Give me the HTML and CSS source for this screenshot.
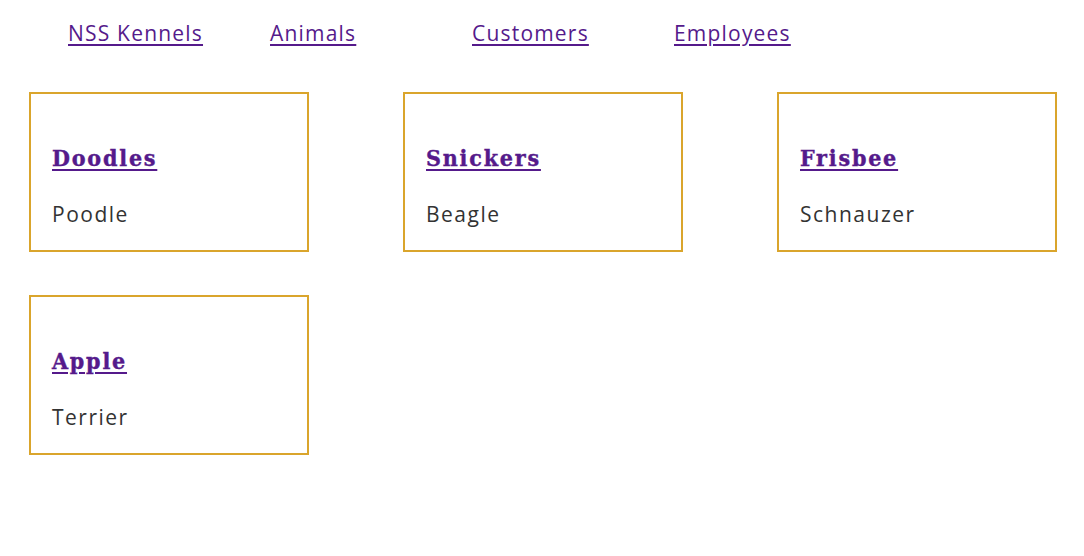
FILE: index.html
```html
<!DOCTYPE html>
<html>
<head>
<meta charset="utf-8">
<link rel="stylesheet" href="styles.css">
</head>
<body>
<nav class="navbar">
  <ul class="nav-list">
    <li class="nav-item"><a class="nav-link" href="#">NSS Kennels</a></li>
    <li class="nav-item"><a class="nav-link" href="#">Animals</a></li>
    <li class="nav-item"><a class="nav-link" href="#">Customers</a></li>
    <li class="nav-item"><a class="nav-link" href="#">Employees</a></li>
  </ul>
</nav>
<main class="animals">
  <section class="animal">
    <h3 class="animal-name"><a href="#">Doodles</a></h3>
    <div class="animal-breed">Poodle</div>
  </section>
  <section class="animal">
    <h3 class="animal-name"><a href="#">Snickers</a></h3>
    <div class="animal-breed">Beagle</div>
  </section>
  <section class="animal">
    <h3 class="animal-name"><a href="#">Frisbee</a></h3>
    <div class="animal-breed">Schnauzer</div>
  </section>
  <section class="animal">
    <h3 class="animal-name"><a href="#">Apple</a></h3>
    <div class="animal-breed">Terrier</div>
  </section>
</main>
</body>
</html>
```
FILE: styles.css
```css
body {
  margin: 0;
  background: #fff;
  font-family: "Open Sans", "Noto Sans", sans-serif;
  color: #333;
}
a {
  color: #551a8b;
}
.navbar {
  padding: 18px 0 0 68px;
}
.nav-list {
  list-style: none;
  margin: 0;
  padding: 0;
  display: flex;
}
.nav-item {
  width: 202px;
  flex: none;
}
.nav-link {
  font-size: 21px;
  line-height: 30px;
  letter-spacing: 1.2px;
  text-underline-offset: 3px;
}
.animals {
  display: grid;
  grid-template-columns: repeat(3, 280px);
  column-gap: 94px;
  row-gap: 43px;
  padding: 44px 0 0 29px;
}
.animal {
  box-sizing: border-box;
  height: 160px;
  border: 2px solid #daa52c;
  padding: 48px 20px 0 21px;
}
.animal-name {
  margin: 0;
  font-family: "DejaVu Serif", serif;
  font-stretch: condensed;
  font-weight: 900;
  font-size: 23px;
  letter-spacing: 1.8px;
  line-height: 32px;
  -webkit-text-stroke: 0.4px #551a8b;
}
.animal-name a {
  text-decoration-thickness: 2px;
  text-underline-offset: 3px;
}
.animal-breed {
  margin-top: 27px;
  font-size: 21px;
  line-height: 26px;
  letter-spacing: 1.5px;
}
```
